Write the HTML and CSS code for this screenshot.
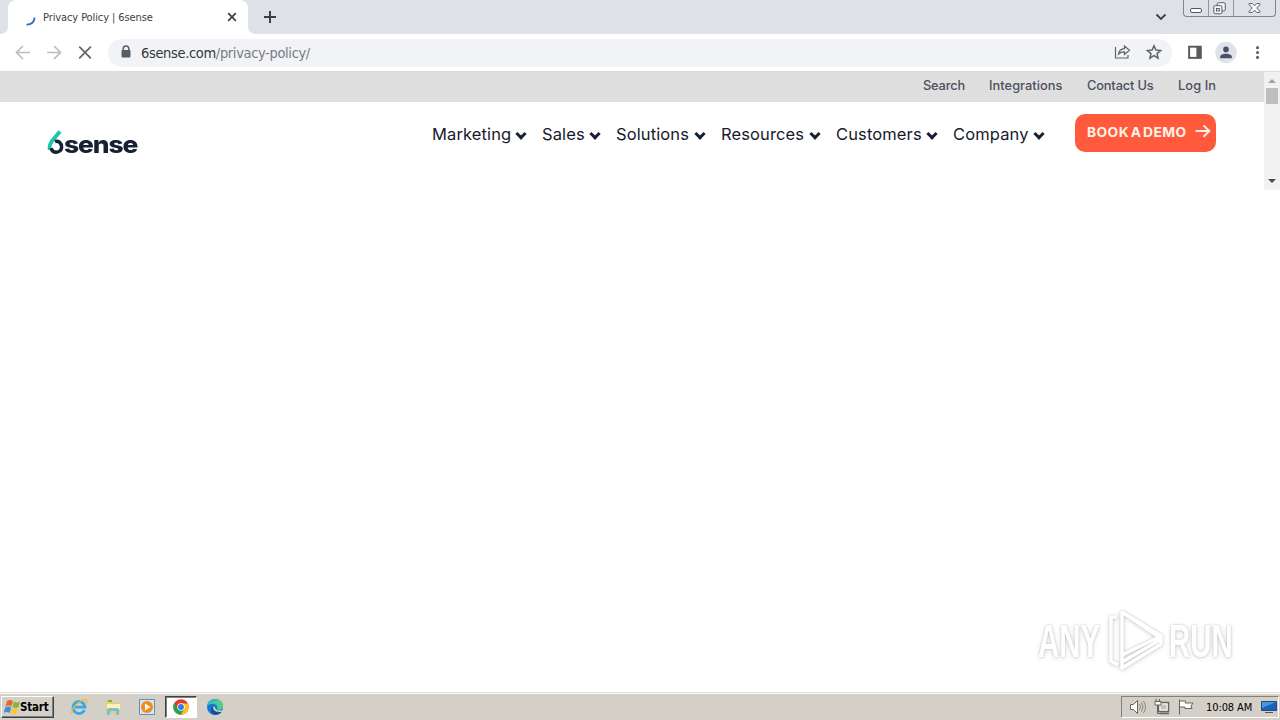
FILE: index.html
```html
<!DOCTYPE html>
<html lang="en">
<head>
<meta charset="utf-8">
<title>Privacy Policy | 6sense</title>
<link rel="stylesheet" href="styles.css">
</head>
<body>
<div class="tabstrip">
  <div class="tab">
    <svg class="spinner" width="14" height="14" viewBox="0 0 14 14"><path d="M12.500 4.500C12.500 9 9.500 11.700 4.500 11.600" fill="none" stroke="#3764cc" stroke-width="1.800"/></svg>
    <span class="tab-title">Privacy Policy | 6sense</span>
    <svg class="tab-close" width="10" height="10" viewBox="0 0 10 10"><path d="M1.200 1.200l7.600 7.600M8.800 1.200L1.200 8.800" stroke="#3c4043" stroke-width="1.700"/></svg>
    <svg class="foot" width="8" height="8" viewBox="0 0 8 8"><path d="M0 0Q0 8 8 8H0z" fill="#fff"/></svg>
    <svg class="foot foot-left" width="8" height="8" viewBox="0 0 8 8"><path d="M8 0Q8 8 0 8H8z" fill="#fff"/></svg>
  </div>
  <svg class="newtab" width="14" height="14" viewBox="0 0 14 14"><path d="M7 1v12M1 7h12" stroke="#3c4043" stroke-width="2"/></svg>
  <svg class="tabsearch" width="12" height="8" viewBox="0 0 12 8"><path d="M1.500 1.500L6 6l4.500-4.500" fill="none" stroke="#3c4043" stroke-width="1.800"/></svg>
  <div class="winctl">
    <svg width="24" height="16" viewBox="0 0 24 16"><rect x="6.500" y="8.500" width="11" height="4" rx="1.500" fill="#fff" stroke="#53565e"/></svg>
    <svg width="25" height="16" viewBox="0 0 25 16"><g fill="#f4f5f7" stroke="#53565e"><rect x="8.500" y="2.500" width="8.500" height="8.500" rx="1.500"/><rect x="5" y="5.500" width="8.500" height="8.500" rx="1.500"/><rect x="7.800" y="8.500" width="3" height="2.500"/></g></svg>
    <svg width="42" height="16" viewBox="0 0 42 16"><path d="M15.500 3.500h3.300L21 5.800l2.200-2.300h3.300v1.200L23.200 8l3.300 3.300v1.200h-3.300L21 10.200l-2.200 2.300h-3.300v-1.200L18.800 8l-3.300-3.300z" fill="#fff" stroke="#53565e"/></svg>
  </div>
</div>
<div class="toolbar">
  <svg class="nav-icons" width="108" height="34" viewBox="0 0 108 34" fill="none" stroke-width="1.700">
    <path d="M29.300 16H15.500M22 9.300L15.300 16l6.700 6.700M47 16h13.500M54 9.300l6.700 6.700-6.700 6.700" stroke="#babcbe"/>
    <path d="M80 10l12 12M92 10L80 22" stroke="#5f6368"/>
  </svg>
  <div class="omnibox">
    <svg class="lock" width="10" height="14" viewBox="0 0 10 14"><path d="M2.200 6V3.700a2.800 2.800 0 0 1 5.600 0V6" fill="none" stroke="#5a5e63" stroke-width="1.500"/><rect x=".5" y="5" width="9" height="7.500" rx="1" fill="#5a5e63"/></svg>
    <span class="url"><b>6sense.com</b>/privacy-policy/</span>
    <svg class="omni-icons" width="50" height="20" viewBox="0 0 50 20" fill="none" stroke="#5f6368">
      <path d="M1.500 5v11h12.500v-3M4.500 12c.5-3.500 2.500-5 6-5.300V4l5 4.300-5 4.200V9.900c-2.500 0-4.500.500-6 2.100z" stroke-width="1.200"/>
      <path d="M40 3.800l1.900 4.300 4.700.4-3.600 3.100 1.100 4.600-4.100-2.500-4.100 2.500 1.100-4.600-3.600-3.100 4.700-.4z" stroke-width="1.500"/>
    </svg>
  </div>
  <svg class="right-icons" width="108" height="34" viewBox="0 0 108 34">
    <rect x="16" y="10" width="12" height="11.500" fill="#fff" stroke="#5a5a5e" stroke-width="2"/><path d="M23.500 10h5v12h-5z" fill="#5a5a5e"/>
    <circle cx="54" cy="16" r="11" fill="#dfe2e8"/><circle cx="54" cy="12.800" r="2.900" fill="#475069"/><path d="M48 22v-1.700c0-4.200 12-4.200 12 0V22z" fill="#475069"/>
    <g fill="#5f6368"><circle cx="86.500" cy="11" r="1.600"/><circle cx="86.500" cy="16" r="1.600"/><circle cx="86.500" cy="21" r="1.600"/></g>
  </svg>
</div>
<div class="viewport">
  <main class="page">
    <div class="utility">
      <a class="u-search">Search</a><a class="u-int">Integrations</a><a class="u-contact">Contact Us</a><a class="u-login">Log In</a>
    </div>
    <header class="site-header">
      <div class="logo">
        <svg width="17" height="26" viewBox="0 0 17 26" fill="none"><path d="M3 19.500C2 17 3 14 5 11L13 1.500" stroke="#20c5b0" stroke-width="4"/><path d="M8 11.700C11.500 10.200 14.600 13 14.600 17c0 3.300-2.400 5.200-5.300 5.200-2.700 0-4.500-1.500-5.300-4" stroke="#182033" stroke-width="3.500"/></svg>
        <span class="wordmark">sense</span>
      </div>
      <nav class="menu">
        <a class="m1">Marketing<i></i></a><a class="m2">Sales<i></i></a><a class="m3">Solutions<i></i></a><a class="m4">Resources<i></i></a><a class="m5">Customers<i></i></a><a class="m6">Company<i></i></a>
      </nav>
      <div class="demo"><span>BOOK A DEMO</span><svg width="16" height="14" viewBox="0 0 16 14"><path d="M.500 6h13.500M8.500 .300L14.300 6l-5.800 5.700" fill="none" stroke="#ffece4" stroke-width="2"/></svg></div>
    </header>
  </main>
  <div class="scrollbar">
    <svg width="8" height="4" viewBox="0 0 8 4"><path d="M4 0l4 4H0z" fill="#a3a3a3"/></svg>
    <div class="thumb"></div>
    <svg class="down" width="8" height="4" viewBox="0 0 8 4"><path d="M4 4L0 0h8z" fill="#484848"/></svg>
  </div>
</div>
<div class="watermark">
  <span class="w-any">ANY</span>
  <svg width="58" height="64" viewBox="0 0 58 64" fill="none" stroke="#fff" stroke-width="3.500" stroke-linejoin="round"><path d="M16 4v43l37-18zM16 4l39 24v8L16 60v-6M11 9H5v44l7 4M16 47v7l38-22"/></svg>
  <span class="w-run">RUN</span>
</div>
<div class="taskbar">
  <div class="start">
    <svg width="17" height="16" viewBox="0 0 17 16"><path d="M3 2q3-2 6 0L7.500 7.500q-3-2-6 0z" fill="#ef6529"/><path d="M10 2.500q3 1.800 6 0L14.500 8q-3 1.800-6 0z" fill="#83b735"/><path d="M1.200 8.500q3-2 6 0L5.700 14q-3-2-6 0z" fill="#428fd5"/><path d="M8.200 9q3 1.800 6 0l-1.500 5.500q-3 1.800-6 0z" fill="#fbc23c"/></svg>
    <span>Start</span>
  </div>
  <div class="quick">
    <svg width="18" height="18" viewBox="0 0 18 18" fill="none"><path d="M14.500 12A6 6 0 1 1 15 9.200H5" stroke="#38a9e4" stroke-width="2.800"/><path d="M2 16C-.500 12 12-1 16.500 2.300 17.700 3.500 15.500 6 15 6" stroke="#e9bd3f" stroke-width="1.300"/></svg>
    <svg width="18" height="18" viewBox="0 0 18 18"><path d="M2 3h6l1 2h7v11H2z" fill="#eccd67"/><path d="M3 6h13v5H3z" fill="#fff2b3"/><path d="M4 2h4v2H4z" fill="#67b55b"/><path d="M3 17v-5q0-2 2-2h8q2 0 2 2v5h-3v-4H6v4z" fill="#76bde5"/></svg>
    <svg width="18" height="18" viewBox="0 0 18 18"><path d="M1.500 1.500h15v15h-15z" fill="#d5e6f4" stroke="#5e91bc"/><circle cx="9" cy="9" r="6" fill="#f68a17"/><path d="M7 5.500v7L12.500 9z" fill="#fff"/></svg>
    <div class="active"><svg width="16" height="16" viewBox="0 0 18 18"><circle cx="9" cy="9" r="8.700" fill="#e33b2e"/><path d="M1.500 4.600A8.700 8.700 0 0 0 8.700 17.700L12.700 11 9 9 5.300 11z" fill="#24a451"/><path d="M8.700 17.700A8.700 8.700 0 0 0 16.500 5H9l4 6z" fill="#fcc51d"/><circle cx="9" cy="9" r="4.200" fill="#fff"/><circle cx="9" cy="9" r="3.300" fill="#3b78e7"/></svg></div>
    <svg width="18" height="18" viewBox="0 0 18 18"><circle cx="9" cy="9" r="8" fill="#1679c9"/><path d="M1.200 8C2.500-1 17-1 17 8.500c0 3.500-4.500 4-6 2.500 1-2.500-.500-5-4-5-2.500 0-4.500.500-5.800 2z" fill="#38bcc4"/><path d="M12 1.600C16 3 17 6 17 8.500c0 3.500-4.500 4-6 2.500 2-4-1-6-3-6.300z" fill="#50cf8b"/><path d="M7 9c0 4 5 6 9.200 4.100C13 19 4 17.500 5 11.500 5.200 10 6 9 7 9z" fill="#124f9c"/><path d="M9 8.500c-.500 3 3 5 8.500 3.400l-.900 1.500C12 15 7 13 7 9.500z" fill="#d4d0c8"/></svg>
  </div>
  <div class="tray">
    <svg width="66" height="18" viewBox="0 0 66 18" fill="#fff" stroke="#66645f">
      <path d="M1.500 6.500h3l4-4v13l-4-4h-3z"/><path d="M10.500 6q1.800 3 0 6M12.500 4.500q3 4.500 0 9M14.500 3q4 6 0 12" fill="none" stroke="#8c8982"/>
      <path d="M29.500 4.500h10v9h-10zM31 15.500h9" stroke-width="1.500"/><path d="M31.500 6.500h6v5h-6z" fill="#c4c1ba" stroke="none"/><path d="M27 3.500V1M30.500 3.500V1M28.500 7v8.500h3" fill="none"/><path d="M26 3.500h6v3.500h-6z"/>
      <path d="M50.500 1.500v15M50.500 3h6v2h7.500l-2 3 1 2.500h-7V9h-5.500z"/>
    </svg>
    <span class="clock">10:08 AM</span>
    <svg class="desk" width="16" height="14" viewBox="0 0 16 14"><path d="M.500 1.500h15v9H.500z" fill="#1962b8" stroke="#254a7a"/><path d="M1 2h14L1 8z" fill="#4897e3"/><path d="M4 12.500h8" stroke="#555"/></svg>
  </div>
</div>
</body>
</html>
```
FILE: styles.css
```css
* { box-sizing: border-box; }
body { margin: 0; width: 1280px; height: 720px; overflow: hidden; background: #fff; display: flex; flex-direction: column; position: relative; font-family: Inter, sans-serif; }
svg { display: block; flex: none; }
span, a { white-space: nowrap; }
.tabstrip { height: 34px; flex: none; background: #dee1e8; display: flex; align-items: center; padding-left: 8px; }
.tab { position: relative; width: 240px; height: 34px; background: #fff; border-radius: 8px 8px 0 0; display: flex; align-items: center; padding: 0 11px 0 14px; }
.spinner { margin-top: 5px; }
.tab-title { margin-left: 7px; font: 11px "DejaVu Sans Condensed", "DejaVu Sans", sans-serif; font-stretch: condensed; letter-spacing: -.1px; color: #3c4043; }
.tab-close { margin-left: auto; }
.foot { position: absolute; left: 100%; bottom: 0; }
.foot-left { left: -8px; }
.newtab { margin-left: 15px; }
.tabsearch { margin-left: 878px; }
.winctl { display: flex; align-self: flex-start; margin-left: 16px; height: 17px; width: 93px; border: 1px solid #81848c; border-top: 0; border-radius: 0 0 4px 4px; }
.winctl svg + svg { border-left: 1px solid #92959d; }
.toolbar { height: 38px; flex: none; display: flex; align-items: center; border-bottom: 1px solid #dcdcdc; }
.omnibox { width: 1064px; height: 28px; border-radius: 14px; background: #f1f3f6; display: flex; align-items: center; padding: 0 8px 0 13px; }
.nav-icons, .right-icons { padding-top: 1px; }
.url { margin-left: 10px; font: 14.500px "DejaVu Sans Condensed", "DejaVu Sans", sans-serif; font-stretch: condensed; font-weight: 200; letter-spacing: -.34px; color: #777b80; }
.url b { font-weight: 400; color: #35373b; }
.omni-icons { margin: -1px 0 0 auto; }
.lock { margin-top: -1px; }
.viewport { display: flex; height: 118px; flex: none; }
.page { width: 1264px; }
.utility { height: 30px; background: #dfdfdf; display: flex; gap: 24px; justify-content: flex-end; padding-right: 48px; font-size: 12.800px; line-height: 28px; font-weight: 500; color: #4c4f5e; }
.u-search { width: 42px; letter-spacing: -.15px; }
.u-int { width: 74px; letter-spacing: .05px; }
.u-contact { width: 67px; letter-spacing: -.15px; }
.u-login { width: 38px; letter-spacing: .1px; }
.site-header { display: flex; height: 88px; padding-left: 47px; }
.logo { display: flex; width: 92px; height: 26px; margin-top: 28px; }
.wordmark { font: 800 24px/29px Inter, sans-serif; color: #182033; letter-spacing: -1px; transform: scaleX(1.1); transform-origin: 0 50%; }
.menu { display: flex; gap: 15px; margin-left: 293px; font-size: 16.500px; letter-spacing: .12px; line-height: 24px; padding-top: 20px; color: #161a2c; height: 44px; }
.menu a { display: flex; justify-content: space-between; }
.menu i { width: 8px; height: 8px; border: solid #182033; border-width: 0 3px 3px 0; transform: rotate(45deg); margin: 7.500px 2px 0 0; }
.m1 { width: 95px; }
.m2 { width: 59px; }
.m3 { width: 90px; }
.m4 { width: 100px; }
.m5 { width: 102px; }
.m6 { width: 92px; }
.demo { width: 141px; height: 38px; border-radius: 10px; background: #ff5a3c; margin: 12px 0 0 30px; display: flex; align-items: center; justify-content: space-between; padding: 0 5px 3px 12px; font-size: 13.800px; letter-spacing: .42px; word-spacing: -2px; font-weight: 700; color: #fff2e8; }
.scrollbar { width: 16px; background: #f1f1f1; display: flex; flex-direction: column; align-items: center; padding: 7px 0; }
.thumb { width: 12px; height: 16px; margin-top: 5px; background: #bfbfbf; }
.down { margin-top: auto; }
.watermark { position: absolute; left: 1038px; top: 608px; height: 64px; display: flex; align-items: center; color: #fff; font-size: 46px; filter: drop-shadow(0 0 1px rgba(0,0,0,.18)) drop-shadow(0 1px 2px rgba(0,0,0,.14)); font-family: "Liberation Sans", sans-serif; }
.watermark span { display: block; transform-origin: 0 50%; transform: scaleX(.64); width: 66px; padding-top: 1px; font-weight: 700; }
.watermark svg { margin: 0 5px 0 2px; }
.taskbar { margin-top: auto; height: 28px; background: #d4d0c8; border-top: 1px solid #dedbd2; box-shadow: inset 0 1px #fff; display: flex; align-items: center; padding: 0 2px 0 1px; }
.start { height: 22px; width: 53px; margin-top: 1px; display: flex; align-items: center; padding-left: 2px; border: 1px solid; border-color: #fff #404040 #404040 #fff; box-shadow: inset -1px -1px #808080; font: bold 11.500px "DejaVu Sans Condensed", sans-serif; letter-spacing: -.2px; }
.start span { margin-left: -1px; }
.quick { display: flex; align-items: center; gap: 16px; margin-left: 16px; }
.active { width: 32px; height: 22px; margin: 0 -7px; border: 1px solid; border-color: #404040 #fff #fff #404040; box-shadow: inset 1px 1px #808080; background: #fff; display: flex; align-items: center; justify-content: center; }
.tray { margin-left: auto; width: 158px; height: 22px; border: 1px solid; border-color: #808080 #fff #fff #808080; display: flex; align-items: center; padding-left: 7px; margin-right: -1px; }
.clock { margin: 1px 0 0 11px; font: 11px "DejaVu Sans Condensed", sans-serif; letter-spacing: -.1px; color: #000; }
.desk { margin: 0 1px 0 auto; }
```
